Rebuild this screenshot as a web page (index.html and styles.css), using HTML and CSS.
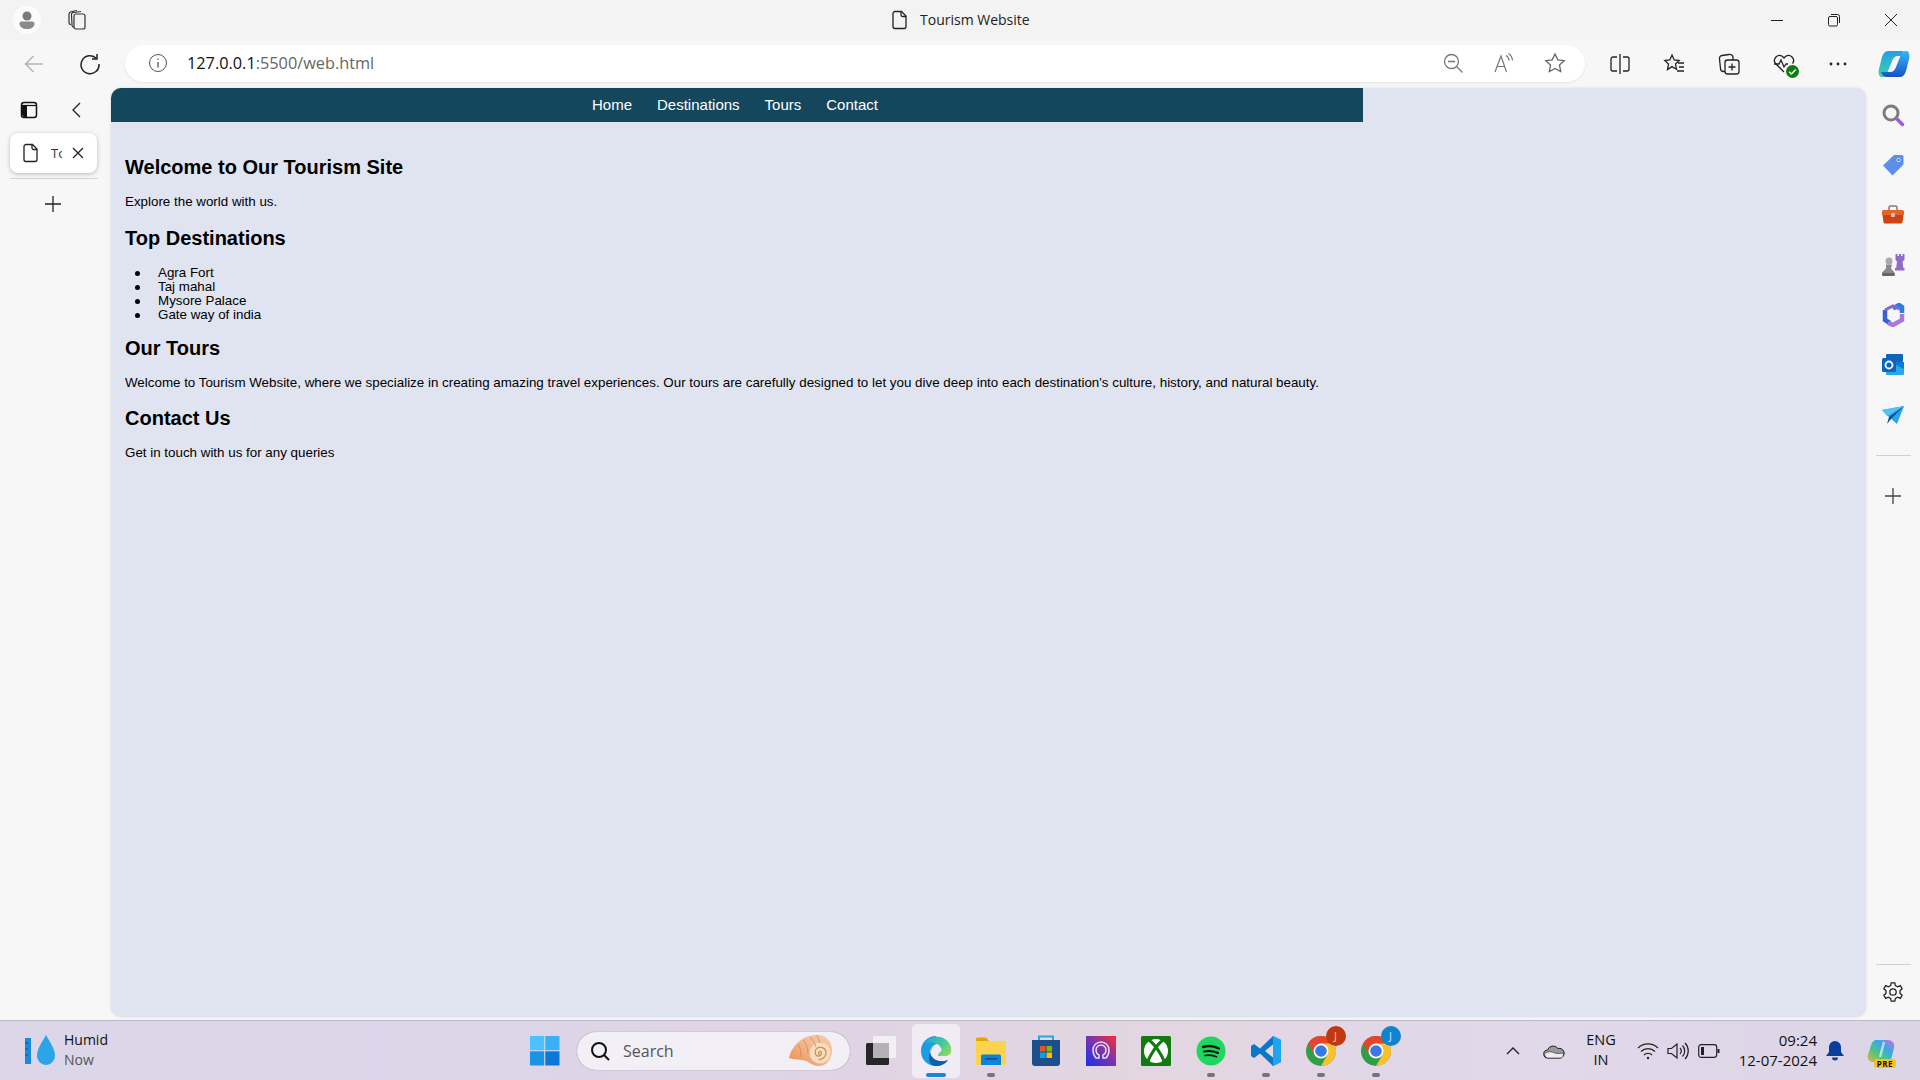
FILE: index.html
```html
<!DOCTYPE html>
<html>
<head>
    <title>Tourism Website</title>
    <link rel="stylesheet" href="styles.css">
</head>
<body>
    <div class="titlebar">
        <div class="title-left">
            <span class="avatar">
                <svg width="24" height="24" viewBox="0 0 24 24"><circle cx="12" cy="8" r="4.500" fill="#7a7a7a"/><path d="M4.500 15.500a2 2 0 0 1 2-2h11a2 2 0 0 1 2 2c0 3.500-3 5.500-7.500 5.500S4.500 19 4.500 15.500z" fill="#8a8a8a"/></svg>
            </span>
            <svg class="collections" width="22" height="22" viewBox="0 0 22 22" fill="none" stroke="#333" stroke-width="1.200"><rect x="8" y="5" width="11" height="15" rx="2"/><path d="M8 18a2 2 0 0 1-2-2.500L5.500 6A2 2 0 0 1 8 3.500l7-1"/><path d="M5 15.500a2 2 0 0 1-2-2.300L3 6a3 3 0 0 1 3-3.500l5-1"/></svg>
        </div>
        <div class="title-center">
            <svg width="20" height="20" viewBox="0 0 20 20" fill="none" stroke="#222" stroke-width="1.300"><path d="M5 1.500h6.500L16 6v10.500a2 2 0 0 1-2 2H5a2 2 0 0 1-2-2v-13a2 2 0 0 1 2-2z"/><path d="M11 1.500V5a1.500 1.500 0 0 0 1.500 1.500H16"/></svg>
            <span>Tourism Website</span>
        </div>
        <div class="window-controls">
            <svg width="14" height="14" viewBox="0 0 14 14" stroke="#222" fill="none"><path d="M1 7.500h12"/></svg>
            <svg width="14" height="14" viewBox="0 0 14 14" stroke="#222" fill="none"><rect x="1.500" y="3.500" width="9" height="9.500" rx="1.500"/><path d="M4 1.500h6.500a2 2 0 0 1 2 2V10"/></svg>
            <svg width="14" height="14" viewBox="0 0 14 14" stroke="#222" fill="none"><path d="M1 1l12 12M13 1L1 13"/></svg>
        </div>
    </div>

    <div class="toolbar">
        <svg class="nav-icon" width="22" height="22" viewBox="0 0 22 22" fill="none" stroke="#b4b4b4" stroke-width="1.500"><path d="M20 11H2.500M10.500 3l-8 8 8 8"/></svg>
        <svg class="nav-icon" width="22" height="22" viewBox="0 0 22 22" fill="none" stroke="#222" stroke-width="1.500"><path d="M17.500 5.500A9 9 0 1 0 20 11"/><path d="M18 1v5h-5"/></svg>
        <div class="address">
            <svg width="20" height="20" viewBox="0 0 20 20" fill="none" stroke="#555"><circle cx="10" cy="10" r="8.500"/><path d="M10 9v5.500" stroke-width="1.300"/><circle cx="10" cy="6.200" r=".8" fill="#555" stroke="none"/></svg>
            <span class="url"><b>127.0.0.1</b>:5500/web.html</span>
            <div class="address-icons">
                <svg width="22" height="22" viewBox="0 0 22 22" fill="none" stroke="#777" stroke-width="1.300"><circle cx="9.500" cy="9.500" r="7"/><path d="M6 9.500h7M14.500 14.500l6 6"/></svg>
                <svg width="22" height="22" viewBox="0 0 22 22" fill="none" stroke="#777" stroke-width="1.200"><path d="M2 20L8 4l5.500 16M4 14.500h8"/><path d="M13 3.500a6 6 0 0 1 3 5M15.500 1.500a9 9 0 0 1 4 7"/></svg>
                <svg width="22" height="22" viewBox="0 0 22 22" fill="none" stroke="#666" stroke-width="1.300"><path d="M11 2l2.800 5.900 6.400.8-4.700 4.400 1.200 6.400L11 16.400l-5.700 3.100 1.200-6.400L1.800 8.700l6.400-.8z"/></svg>
            </div>
        </div>
        <div class="toolbar-icons">
            <svg width="22" height="22" viewBox="0 0 22 22" fill="none" stroke="#222" stroke-width="1.300"><path d="M8 4H4a2 2 0 0 0-2 2v10a2 2 0 0 0 2 2h4M14 4h4a2 2 0 0 1 2 2v10a2 2 0 0 1-2 2h-4M11 1v20"/></svg>
            <svg width="24" height="24" viewBox="0 0 24 24" fill="none" stroke="#222" stroke-width="1.300"><path d="M10 3l2.200 5 5 .6-3.700 3.400 1 5.200-4.500-2.600-4.500 3L6.500 12 2.800 8.600l5-.6z"/><path d="M16 11h6M17 15h5M15 19h7"/></svg>
            <svg width="24" height="24" viewBox="0 0 24 24" fill="none" stroke="#222" stroke-width="1.300"><rect x="8" y="8" width="14" height="14" rx="2.500"/><path d="M15 11.500v7M11.500 15h7"/><path d="M8 19.500H6.500a3 3 0 0 1-3-3L2.500 7A3 3 0 0 1 5 3.500L12 2.500a3 3 0 0 1 4 3V8"/></svg>
            <span class="health">
                <svg width="24" height="24" viewBox="0 0 24 24" fill="none" stroke="#222" stroke-width="1.300"><path d="M12 20L3.500 11.500a5 5 0 0 1 7-7L12 6l1.500-1.500a5 5 0 0 1 7 7"/><path d="M2 12h5l2-4 3 7 2-3h2"/></svg>
                <svg class="health-badge" width="13" height="13" viewBox="0 0 12 12"><circle cx="6" cy="6" r="6" fill="#107c10"/><path d="M3 6.200l2 2 4-4" stroke="#fff" stroke-width="1.300" fill="none"/></svg>
            </span>
            <svg width="22" height="22" viewBox="0 0 22 22" fill="#222"><circle cx="4" cy="11" r="1.400"/><circle cx="11" cy="11" r="1.400"/><circle cx="18" cy="11" r="1.400"/></svg>
        </div>
        <svg class="copilot" width="32" height="28" viewBox="0 0 32 28">
            <defs>
                <linearGradient id="copA" x1="0" y1="0" x2="0" y2="1"><stop offset="0" stop-color="#2a9de8"/><stop offset=".6" stop-color="#2ec0c0"/><stop offset="1" stop-color="#35d890"/></linearGradient>
                <linearGradient id="copB" x1="0" y1="0" x2="0" y2="1"><stop offset="0" stop-color="#1a4fc0"/><stop offset=".5" stop-color="#2486e8"/><stop offset="1" stop-color="#35b8f0"/></linearGradient>
            </defs>
            <path d="M10 1h13c3 0 5 2 6 5h-9c-3 0-5 2-6 5l-4 10c-1 4-3 6-6 6H3c-2-1-3-4-2-8l3-12C5 4 7 1 10 1z" fill="url(#copA)"/>
            <path d="M10 1h13c3 0 5 2 6 5h-9c-3 0-5 2-6 5l-4 10c-1 4-3 6-6 6H3c-2-1-3-4-2-8l3-12C5 4 7 1 10 1z" fill="url(#copB)" transform="rotate(180 16 14)"/>
        </svg>
    </div>

    <div class="middle">
        <aside class="tab-rail">
            <div class="rail-head">
                <svg width="20" height="20" viewBox="0 0 20 20"><rect x="2.500" y="2.500" width="15" height="15" rx="2.500" fill="none" stroke="#111" stroke-width="1.500"/><path d="M3 5.500h14" stroke="#111" stroke-width="1.200"/><path d="M3 6h5v11H5l-2-2z" fill="#111"/></svg>
                <svg width="20" height="20" viewBox="0 0 20 20" fill="none" stroke="#222" stroke-width="1.300"><path d="M13 3l-7 7 7 7"/></svg>
            </div>
            <div class="tab-card">
                <svg width="20" height="20" viewBox="0 0 20 20" fill="none" stroke="#222" stroke-width="1.300"><path d="M5 1.500h6.500L16 6v10.500a2 2 0 0 1-2 2H5a2 2 0 0 1-2-2v-13a2 2 0 0 1 2-2z"/><path d="M11 1.500V5a1.500 1.500 0 0 0 1.500 1.500H16"/></svg>
                <span class="tab-text">Tourism Website</span>
                <svg width="14" height="14" viewBox="0 0 14 14" fill="none" stroke="#222" stroke-width="1.300"><path d="M2 2l10 10M12 2L2 12"/></svg>
            </div>
            <div class="tab-divider"></div>
            <svg class="tab-plus" width="20" height="20" viewBox="0 0 20 20" stroke="#222" stroke-width="1.300"><path d="M10 2v16M2 10h16"/></svg>
        </aside>

        <main class="page">
            <nav class="site-nav">
                <a href="#">Home</a>
                <a href="#">Destinations</a>
                <a href="#">Tours</a>
                <a href="#">Contact</a>
            </nav>
            <section class="content">
                <h2 class="first">Welcome to Our Tourism Site</h2>
                <p>Explore the world with us.</p>
                <h2>Top Destinations</h2>
                <ul>
                    <li>Agra Fort</li>
                    <li>Taj mahal</li>
                    <li>Mysore Palace</li>
                    <li>Gate way of india</li>
                </ul>
                <h2>Our Tours</h2>
                <p>Welcome to Tourism Website, where we specialize in creating amazing travel experiences. Our tours are carefully designed to let you dive deep into each destination's culture, history, and natural beauty.</p>
                <h2>Contact Us</h2>
                <p>Get in touch with us for any queries</p>
            </section>
        </main>

        <aside class="side-rail">
            <div class="rail-icon">
                <svg width="24" height="24" viewBox="0 0 24 24" fill="none"><circle cx="10" cy="10" r="7" stroke="#7c7c7c" stroke-width="3"/><path d="M15.500 15.500l6 6" stroke="#9a62c8" stroke-width="3.500" stroke-linecap="round"/></svg>
            </div>
            <div class="rail-icon">
                <svg width="24" height="24" viewBox="0 0 24 24"><path d="M13 2h8a1.500 1.500 0 0 1 1.500 1.500v8L11.500 22.500 2 12.500z" fill="#5b8fe8"/><circle cx="17.500" cy="7" r="2" fill="#fff"/><circle cx="17.500" cy="7" r="1.200" fill="#3f5fc0"/></svg>
            </div>
            <div class="rail-icon">
                <svg width="24" height="24" viewBox="0 0 24 24"><path d="M8 7V4.500A1.500 1.500 0 0 1 9.500 3h5A1.500 1.500 0 0 1 16 4.500V7" fill="none" stroke="#8a7a70" stroke-width="1.500"/><path d="M1 8.500A1.500 1.500 0 0 1 2.500 7h19A1.500 1.500 0 0 1 23 8.500V12H1z" fill="#e8622a"/><path d="M1.500 12h21l-1 7.500a1.500 1.500 0 0 1-1.500 1H4a1.500 1.500 0 0 1-1.500-1z" fill="#cf4310"/><rect x="10" y="10" width="4" height="4" rx=".8" fill="#c8c0b8"/></svg>
            </div>
            <div class="rail-icon">
                <svg width="24" height="24" viewBox="0 0 24 24"><path d="M14.500 1h2v2h1.500V1H20v2h1.500V1h2v6l-2 1.500.8 6.500h1.200v2.500H14V15h1.200l.8-6.500L14.500 7z" fill="#8f6cc8"/><circle cx="8" cy="8" r="3.500" fill="#a8a8a8"/><path d="M5 11.500h6l-1 4 3.500 4v2.500H1v-2.500l4-4z" fill="#8a8a8a"/><rect x="1" y="20" width="13" height="3" rx="1.500" fill="#666"/></svg>
            </div>
            <div class="rail-icon">
                <svg width="24" height="24" viewBox="0 0 24 24" fill="none"><path d="M12 5.500L18 2l3 2v6" stroke="#2c7fd8" stroke-width="4.500"/><path d="M4 7v10l5 3" stroke="#3a5fd0" stroke-width="4.500"/><path d="M7 20l5 2 9-5V11" stroke="#a878dc" stroke-width="4.500"/><path d="M4 7l8-4 7 3" stroke="#7a6ad8" stroke-width="3"/></svg>
            </div>
            <div class="rail-icon">
                <svg width="24" height="24" viewBox="0 0 24 24"><rect x="5" y="1" width="17" height="8" rx="1" fill="#1066b8"/><rect x="5" y="9" width="18" height="13" rx="1" fill="#28a8ea"/><path d="M9 9l14 7v-7z" fill="#0f78d4"/><rect x="1" y="5" width="14" height="14" rx="1.500" fill="#0a64c0"/><circle cx="8" cy="12" r="3.500" fill="none" stroke="#fff" stroke-width="1.800"/></svg>
            </div>
            <div class="rail-icon">
                <svg width="24" height="24" viewBox="0 0 24 24"><path d="M1 7l22-4-7 18-8-7z" fill="#2ba4ee"/><path d="M23 3L8 14l-2 7 4-5z" fill="#0c4f90"/><path d="M23 3L6 13 1 7z" fill="#55c0f5"/></svg>
            </div>
            <div class="rail-line"></div>
            <div class="rail-icon">
                <svg width="18" height="18" viewBox="0 0 18 18" stroke="#444" stroke-width="1.300"><path d="M9 1v16M1 9h16"/></svg>
            </div>
            <div class="rail-bottom">
                <div class="rail-line"></div>
                <svg width="22" height="22" viewBox="0 0 24 24" fill="none" stroke="#222" stroke-width="1.400"><circle cx="12" cy="12" r="3.500"/><path d="M10 2h4l.6 3 2.500 1.300L20 5l2 3.500-2.300 2v3l2.300 2L20 19l-2.900-1.300-2.500 1.300-.6 3h-4l-.6-3-2.500-1.300L4 19l-2-3.500 2.300-2v-3L2 8.500 4 5l2.900 1.300L9.400 5z"/></svg>
            </div>
        </aside>
    </div>

    <footer class="taskbar">
        <div class="weather">
            <svg width="36" height="36" viewBox="0 0 36 36"><rect x="1" y="5" width="6" height="26" fill="#1a8ad8"/><path d="M1 10h3M1 16h3M1 22h3" stroke="#0a4f90"/><path d="M22 2c5 9 9 14 9 21a9 9 0 0 1-18 0c0-7 4-12 9-21z" fill="#2ba4e8"/></svg>
            <div class="weather-text">
                <span>Humid</span>
                <span class="weather-now">Now</span>
            </div>
        </div>
        <div class="task-center">
            <svg class="start" width="30" height="30" viewBox="0 0 30 30"><rect width="14.200" height="14.200" x="0" y="0" fill="#4cc2ff"/><rect width="14.200" height="14.200" x="15.300" y="0" fill="#3ab0f5"/><rect width="14.200" height="14.200" x="0" y="15.300" fill="#1a94e6"/><rect width="14.200" height="14.200" x="15.300" y="15.300" fill="#0a78d8"/></svg>
            <div class="search">
                <svg width="22" height="22" viewBox="0 0 22 22" fill="none" stroke="#111" stroke-width="2"><circle cx="10" cy="10" r="7"/><path d="M15 15l5 5"/></svg>
                <span>Search</span>
                <svg class="shell" width="44" height="33" viewBox="0 0 44 33">
                    <defs><linearGradient id="shellGrad" x1="0" y1="1" x2="1" y2="0"><stop offset="0" stop-color="#e8904f"/><stop offset=".5" stop-color="#f2b488"/><stop offset="1" stop-color="#f5d0b0"/></linearGradient></defs>
                    <path d="M0 24C3 11 14 1 28 1c9 0 15 6 15 15 0 10-6 16-13 16-6 0-8-3-13-5-6-2-12-1-17-3z" fill="url(#shellGrad)"/>
                    <circle cx="31" cy="19" r="10.500" fill="#f8dcc0"/>
                    <path d="M31 20.500a1.500 1.500 0 1 1 1.500-1.500c0 2.500-3 4-5 2.500s-2-6 1-7.500 8-.5 8.500 4c.4 4-3 8-7.500 7.500" fill="none" stroke="#c8863c" stroke-width="1.100"/>
                    <path d="M14 6c3 3 5 8 5 14M21 3c3 3 5 6 6 10M27 1c2 2 3 5 4 8M9 10c2 3 3 7 3 13" stroke="#d08a58" stroke-width=".8" fill="none"/>
                </svg>
            </div>
            <svg class="taskview" width="31" height="29" viewBox="0 0 31 29"><rect x="0" y="7" width="23" height="22" rx="1.500" fill="#262626"/><rect x="7" y="0" width="23" height="22" rx="1.500" fill="#f5f4f6" fill-opacity=".88"/><rect x="7" y="7" width="16" height="15" fill="#b4b2b6"/></svg>
            <div class="task-apps">
                <div class="app app-active">
                    <svg width="32" height="32" viewBox="0 0 32 32">
                        <defs><linearGradient id="edgeGreen" x1="0" y1="0" x2="1" y2=".6"><stop offset="0" stop-color="#22a8d8"/><stop offset=".6" stop-color="#3fc8a0"/><stop offset="1" stop-color="#86d860"/></linearGradient></defs>
                        <path d="M16 1C7 1 1 8 1 16c0 9 7 15 15 15 5 0 9-2 12-6-5 2-12 2-16-3-3-4-2-9 1-11 2-2 6-3 9-2-2-4-7-8-6-8z" fill="#1b9de2"/>
                        <path d="M12 22c4 5 11 5 16 3-3 4-7 6-12 6-4 0-7-3-7-8 0-5 2-9 5-12-4 3-5 7-2 11z" fill="#0c5fa8"/>
                        <path d="M5 8C10 0 26-2 31 12c1 5-1 9-6 9h-7c0-5 5-3 3-8-2-4-8-7-16-5z" fill="url(#edgeGreen)"/>
                    </svg>
                </div>
                <div class="app app-open">
                    <svg width="32" height="32" viewBox="0 0 32 32"><path d="M1 4a1.500 1.500 0 0 1 1.500-1.500H11l3 3.500h-13z" fill="#e0a800"/><rect x="1" y="6" width="30" height="24" rx="1" fill="#fcd34f"/><path d="M6 21a1.500 1.500 0 0 1 1.500-1.500h17a1.500 1.500 0 0 1 1.500 1.500v9H6z" fill="#0a84d8"/><rect x="10" y="23" width="12" height="1.500" fill="#0a4f90"/></svg>
                </div>
                <div class="app">
                    <svg width="32" height="32" viewBox="0 0 32 32"><path d="M9 6V1.500h14V6" fill="none" stroke="#29a8e8" stroke-width="2"/><path d="M2 5h28v23a3 3 0 0 1-3 3H5a3 3 0 0 1-3-3z" fill="#1c4f8c"/><rect x="10" y="11" width="5.500" height="5.500" fill="#f25022"/><rect x="16.500" y="11" width="5.500" height="5.500" fill="#7fba00"/><rect x="10" y="17.500" width="5.500" height="5.500" fill="#00a4ef"/><rect x="16.500" y="17.500" width="5.500" height="5.500" fill="#ffb900"/></svg>
                </div>
                <div class="app">
                    <svg width="30" height="30" viewBox="0 0 30 30"><defs><linearGradient id="appGrad" x1="0" y1="1" x2="1" y2="0"><stop offset="0" stop-color="#1530f0"/><stop offset=".6" stop-color="#8a35a0"/><stop offset="1" stop-color="#ff2a2a"/></linearGradient></defs><rect width="30" height="30" fill="url(#appGrad)"/><path d="M10 22c-2-2-3-5-3-8a8 8 0 0 1 16 0c0 3-1 6-3 8h-3v-3c2-1 3-3 3-5a5 5 0 0 0-10 0c0 2 1 4 3 5v3z" fill="none" stroke="#e8d8f0" stroke-width="1.500"/></svg>
                </div>
                <div class="app">
                    <svg width="30" height="30" viewBox="0 0 30 30" fill="none"><rect width="30" height="30" rx="1.500" fill="#107c10"/><circle cx="15" cy="15" r="12" fill="#fff"/><path d="M7 3C12 7 19 15 24 27M23 3C18 7 11 15 6 27" stroke="#107c10" stroke-width="3"/></svg>
                </div>
                <div class="app app-open">
                    <svg width="30" height="30" viewBox="0 0 30 30" fill="none"><circle cx="15" cy="15" r="14.500" fill="#1ed760"/><path d="M7 11c5-1.500 11-1 16 1.500" stroke="#111" stroke-width="2.400" stroke-linecap="round"/><path d="M8 15.500c4.500-1 9.500-.7 14 1.500" stroke="#111" stroke-width="2" stroke-linecap="round"/><path d="M9 19.500c4-.8 8-.5 11.500 1.200" stroke="#111" stroke-width="1.700" stroke-linecap="round"/></svg>
                </div>
                <div class="app app-open">
                    <svg width="32" height="32" viewBox="0 0 32 32"><path d="M23 1l8 4v22l-8 4-13-12.500L4 23l-3-2v-10l3-2 6 4.500z" fill="#0a78c8"/><path d="M23 1l8 4v22l-8 4z" fill="#1fa5f0"/><path d="M23 9.500L15 16l8 6.500z" fill="#e3dae6"/></svg>
                </div>
                <div class="app app-open">
                    <svg width="32" height="32" viewBox="0 0 32 32"><circle cx="16" cy="16" r="15" fill="#2f9e48"/><path d="M3 8.500a15 15 0 0 1 26 0H16L9.500 19.750z" fill="#e8432e"/><path d="M29 8.500A15 15 0 0 1 16 31l6.500-11.250L16 8.500z" fill="#fbc02d"/><circle cx="16" cy="16" r="7.500" fill="#fff"/><circle cx="16" cy="16" r="5.800" fill="#3b78e7"/></svg>
                    <span class="profile profile-red">J</span>
                </div>
                <div class="app app-open">
                    <svg width="32" height="32" viewBox="0 0 32 32"><circle cx="16" cy="16" r="15" fill="#2f9e48"/><path d="M3 8.500a15 15 0 0 1 26 0H16L9.500 19.750z" fill="#e8432e"/><path d="M29 8.500A15 15 0 0 1 16 31l6.500-11.250L16 8.500z" fill="#fbc02d"/><circle cx="16" cy="16" r="7.500" fill="#fff"/><circle cx="16" cy="16" r="5.800" fill="#3b78e7"/></svg>
                    <span class="profile profile-blue">J</span>
                </div>
            </div>
        </div>
        <div class="tray">
            <svg class="tray-chevron" width="16" height="16" viewBox="0 0 16 16" fill="none" stroke="#222" stroke-width="1.400"><path d="M2 11l6-6 6 6"/></svg>
            <svg class="tray-cloud" width="22" height="16" viewBox="0 0 22 16"><path d="M5 15a4 4 0 0 1-.5-8A6 6 0 0 1 15 5.500 4.800 4.800 0 0 1 17.500 15z" fill="#9a9a9a" stroke="#222"/><path d="M1.500 11c2-2 6-3 9-1.500s7 1 10 .5c0 3-1 5-3 5H5c-2 0-3-2-3.500-4z" fill="#eee" stroke="#222" stroke-width=".6"/></svg>
            <div class="lang"><span>ENG</span><span>IN</span></div>
            <svg class="tray-wifi" width="22" height="18" viewBox="0 0 22 18" fill="none" stroke="#222" stroke-width="1.200"><path d="M1 6a14 14 0 0 1 20 0M4 9.500a10 10 0 0 1 14 0M7 13a5.500 5.500 0 0 1 8 0"/><circle cx="11" cy="16" r="1.200" fill="#222" stroke="none"/></svg>
            <svg class="tray-volume" width="22" height="18" viewBox="0 0 22 18" fill="none" stroke="#222" stroke-width="1.200"><path d="M1 6.500v5h3.500L10 16V2L4.500 6.500z"/><path d="M13 6a4.500 4.500 0 0 1 0 6M15.500 3.500a8 8 0 0 1 0 11M18 1a11.500 11.500 0 0 1 0 16"/></svg>
            <svg class="tray-battery" width="22" height="14" viewBox="0 0 22 14"><rect x=".7" y=".7" width="18" height="12.600" rx="2.500" fill="none" stroke="#222" stroke-width="1.200"/><rect x="3" y="3" width="3" height="8" fill="#222"/><rect x="19.500" y="5" width="2" height="4" fill="#222"/></svg>
            <div class="clock"><span>09:24</span><span>12-07-2024</span></div>
            <svg class="tray-bell" width="18" height="20" viewBox="0 0 18 20" fill="#0a3d9c"><path d="M9 0a6 6 0 0 1 6 6v5l3 4H0l3-4V6a6 6 0 0 1 6-6z"/><path d="M6 16.500h6a3 3 0 0 1-6 0z"/></svg>
            <span class="copilot-pre">
                <svg width="28" height="24" viewBox="0 0 28 24"><defs><linearGradient id="preGrad" x1="0" y1="1" x2="1" y2="0"><stop offset="0" stop-color="#f0b040"/><stop offset=".35" stop-color="#50c878"/><stop offset=".65" stop-color="#38a8e8"/><stop offset="1" stop-color="#d070d8"/></linearGradient></defs><path d="M9 1h12c4 0 7 3 6 8l-2 8c-1 4-3 6-7 6H6c-4 0-6-3-5-7l3-10c1-3 3-5 5-5z" fill="url(#preGrad)"/><path d="M17 3l-4 15" stroke="#fff" stroke-width="2.500" opacity=".6"/></svg>
                <span class="pre-tag">PRE</span>
            </span>
        </div>
    </footer>
</body>
</html>
```

FILE: styles.css
```css
* {
    box-sizing: border-box;
}
html, body {
    height: 100%;
}
body {
    margin: 0;
    display: flex;
    flex-direction: column;
    height: 1080px;
    overflow: hidden;
    background-color: #f7f7f7;
    font-family: "Open Sans", "Noto Sans", sans-serif;
    color: #111;
}
svg {
    display: block;
    flex-shrink: 0;
}

/* title bar */
.titlebar {
    height: 40px;
    display: flex;
    align-items: center;
    justify-content: space-between;
    position: relative;
    background-color: #f3f3f3;
}
.title-left {
    display: flex;
    align-items: center;
    padding-left: 13px;
    gap: 25px;
}
.avatar {
    width: 28px;
    height: 28px;
    border-radius: 50%;
    background-color: #fbfbfb;
    display: flex;
    align-items: center;
    justify-content: center;
}
.title-center {
    position: absolute;
    left: 890px;
    top: 10px;
    display: flex;
    align-items: center;
    gap: 10px;
    font-size: 14px;
    line-height: 20px;
    color: #222;
}
.window-controls {
    display: flex;
    align-items: center;
    gap: 43px;
    padding-right: 22px;
}

/* toolbar */
.toolbar {
    height: 48px;
    display: flex;
    align-items: center;
    padding: 0 0 1px 23px;
}
.nav-icon {
    margin-right: 34px;
}
.toolbar .nav-icon + .nav-icon {
    margin-right: 24px;
}
.address {
    width: 1460px;
    height: 37px;
    margin-top: -1px;
    border-radius: 19px;
    background-color: #fff;
    box-shadow: 0 1px 3px rgba(0, 0, 0, 0.08);
    display: flex;
    align-items: center;
    padding: 0 19px 0 23px;
}
.url {
    margin-left: 19px;
    font-size: 16.300px;
    color: #666;
    font-family: "Open Sans", sans-serif;
}
.url b {
    font-weight: 400;
    color: #111;
}
.address-icons {
    margin-left: auto;
    display: flex;
    align-items: center;
    gap: 29px;
}
.toolbar-icons {
    display: flex;
    align-items: center;
    gap: 31px;
    margin-left: 24px;
}
.health {
    position: relative;
    display: block;
}
.health-badge {
    position: absolute;
    right: -3px;
    bottom: -2px;
}
.copilot {
    margin-left: 29px;
}

/* middle */
.middle {
    height: 932px;
    display: flex;
}
.tab-rail {
    width: 111px;
    display: flex;
    flex-direction: column;
    padding-left: 10px;
}
.rail-head {
    display: flex;
    align-items: center;
    gap: 28px;
    padding: 12px 0 0 9px;
}
.tab-card {
    width: 87px;
    height: 40px;
    margin-top: 13px;
    border-radius: 8px;
    background-color: #fff;
    box-shadow: 0 1px 4px rgba(0, 0, 0, 0.25);
    display: flex;
    align-items: center;
    padding: 0 11px;
}
.tab-text {
    width: 11px;
    margin-left: 10px;
    margin-right: 9px;
    overflow: hidden;
    white-space: nowrap;
    font-size: 13px;
    color: #333;
}
.tab-divider {
    width: 88px;
    height: 1px;
    margin-top: 5px;
    background-color: #d4d4d4;
}
.tab-plus {
    margin: 15px 0 0 33px;
}

/* page */
.page {
    width: 1755px;
    height: 929px;
    border-radius: 10px;
    overflow: hidden;
    background-color: #e0e4f0;
    font-family: "Liberation Sans", Arial, sans-serif;
    color: #000;
    box-shadow: 0 0 3px rgba(0, 0, 0, 0.12);
}
.site-nav {
    width: 1252px;
    height: 34px;
    padding: 0 4px 2px 0;
    background-color: #14475c;
    display: flex;
    align-items: center;
    justify-content: center;
    gap: 25px;
}
.site-nav a {
    color: #fff;
    text-decoration: none;
    font-size: 15px;
}
.content {
    padding: 34px 0 0 14px;
    font-size: 13.36px;
}
h2 {
    margin: 17px 0 15px;
    font-size: 20px;
    line-height: 23px;
}
h2.first {
    margin-top: 0;
}
.first + p + h2 {
    margin-top: 18px;
}
ul + h2 {
    margin-top: 15px;
}
p {
    margin: 0;
    line-height: 15px;
}
ul {
    margin: 16px 0 0;
    padding-left: 10px;
    list-style: none;
    line-height: 14px;
}
li {
    display: flex;
    align-items: center;
}
li::before {
    content: "";
    width: 5px;
    height: 5px;
    margin-right: 18px;
    border-radius: 50%;
    background-color: #000;
}

/* right rail */
.side-rail {
    width: 54px;
    display: flex;
    flex-direction: column;
    align-items: center;
    padding-top: 2px;
    position: relative;
}
.rail-icon {
    height: 50px;
    width: 100%;
    display: flex;
    align-items: center;
    justify-content: center;
}
.rail-line {
    width: 35px;
    height: 1px;
    margin: 15px 0 15px;
    background-color: #d0d0d0;
}
.rail-bottom {
    margin-top: auto;
    height: 56px;
    display: flex;
    flex-direction: column;
    align-items: center;
}
.rail-bottom .rail-line {
    margin: 0 0 16px;
}

/* taskbar */
.taskbar {
    height: 60px;
    border-top: 1px solid #bdb6c4;
    background: linear-gradient(90deg, #dcd6e8 0%, #dbd6e9 20%, #e0d4e4 45%, #e3d6e2 60%, #e0d8ea 85%, #dcd5e6 100%);
    display: flex;
    align-items: center;
    position: relative;
}
.weather {
    width: 530px;
    display: flex;
    align-items: center;
    gap: 4px;
    padding-left: 24px;
}
.weather-text {
    display: flex;
    flex-direction: column;
    margin-top: -2px;
    font-size: 14px;
    line-height: 20px;
}
.weather-now {
    color: #555;
}
.task-center {
    display: flex;
    align-items: center;
}
.search {
    width: 273px;
    height: 38px;
    margin-left: 17px;
    border-radius: 19px;
    background-color: #f3eff6;
    box-shadow: 0 0 1px rgba(0, 0, 0, 0.5);
    display: flex;
    align-items: center;
    padding: 0 17px 0 12px;
    font-size: 16px;
    color: #555;
}
.search span {
    margin-left: 12px;
}
.shell {
    margin-left: auto;
}
.taskview {
    margin-left: 16px;
}
.task-apps {
    display: flex;
    margin-left: 11.500px;
}
.app {
    width: 55px;
    height: 54px;
    display: flex;
    align-items: center;
    justify-content: center;
    position: relative;
    border-radius: 5px;
}
.app-active {
    width: 48px;
    margin: 0 3.500px;
    background-color: #f0ebf4;
}
.app-active::after, .app-open::after {
    content: "";
    position: absolute;
    bottom: 1px;
    left: 50%;
    width: 8px;
    height: 4px;
    margin-left: -4px;
    border-radius: 2px;
    background-color: #77737c;
}
.app-active::after {
    width: 20px;
    margin-left: -10px;
    background-color: #1a86d8;
}
.profile {
    position: absolute;
    top: 2px;
    right: 3px;
    width: 20px;
    height: 20px;
    border-radius: 50%;
    display: flex;
    align-items: center;
    justify-content: center;
    font-size: 11px;
    color: #f0d8d0;
}
.profile-red {
    background-color: #c0390f;
}
.profile-blue {
    background-color: #0f83d0;
    color: #cfe6f8;
}
.tray {
    position: absolute;
    right: 8px;
    top: 0;
    height: 59px;
    width: 420px;
    display: flex;
    align-items: center;
    padding-left: 13px;
}
.tray-cloud {
    margin-left: 22px;
}
.lang {
    width: 60px;
    margin-left: 6px;
    display: flex;
    flex-direction: column;
    align-items: center;
    font-size: 14.500px;
    line-height: 20px;
    margin-top: -2px;
}
.tray-wifi {
    margin-left: 6px;
}
.tray-volume {
    margin-left: 8px;
}
.tray-battery {
    margin-left: 9px;
}
.clock {
    width: 97px;
    display: flex;
    flex-direction: column;
    align-items: flex-end;
    margin-top: -2px;
    font-size: 15px;
    line-height: 20px;
}
.tray-bell {
    margin-left: 9px;
}
.copilot-pre {
    position: relative;
    margin-left: 23px;
    display: block;
}
.pre-tag {
    position: absolute;
    right: -1px;
    bottom: -5px;
    padding: 0 3px;
    border-radius: 3px;
    background-color: #f8c020;
    font-size: 8px;
    line-height: 9px;
    font-weight: 700;
    letter-spacing: 0.5px;
    color: #111;
}
```
